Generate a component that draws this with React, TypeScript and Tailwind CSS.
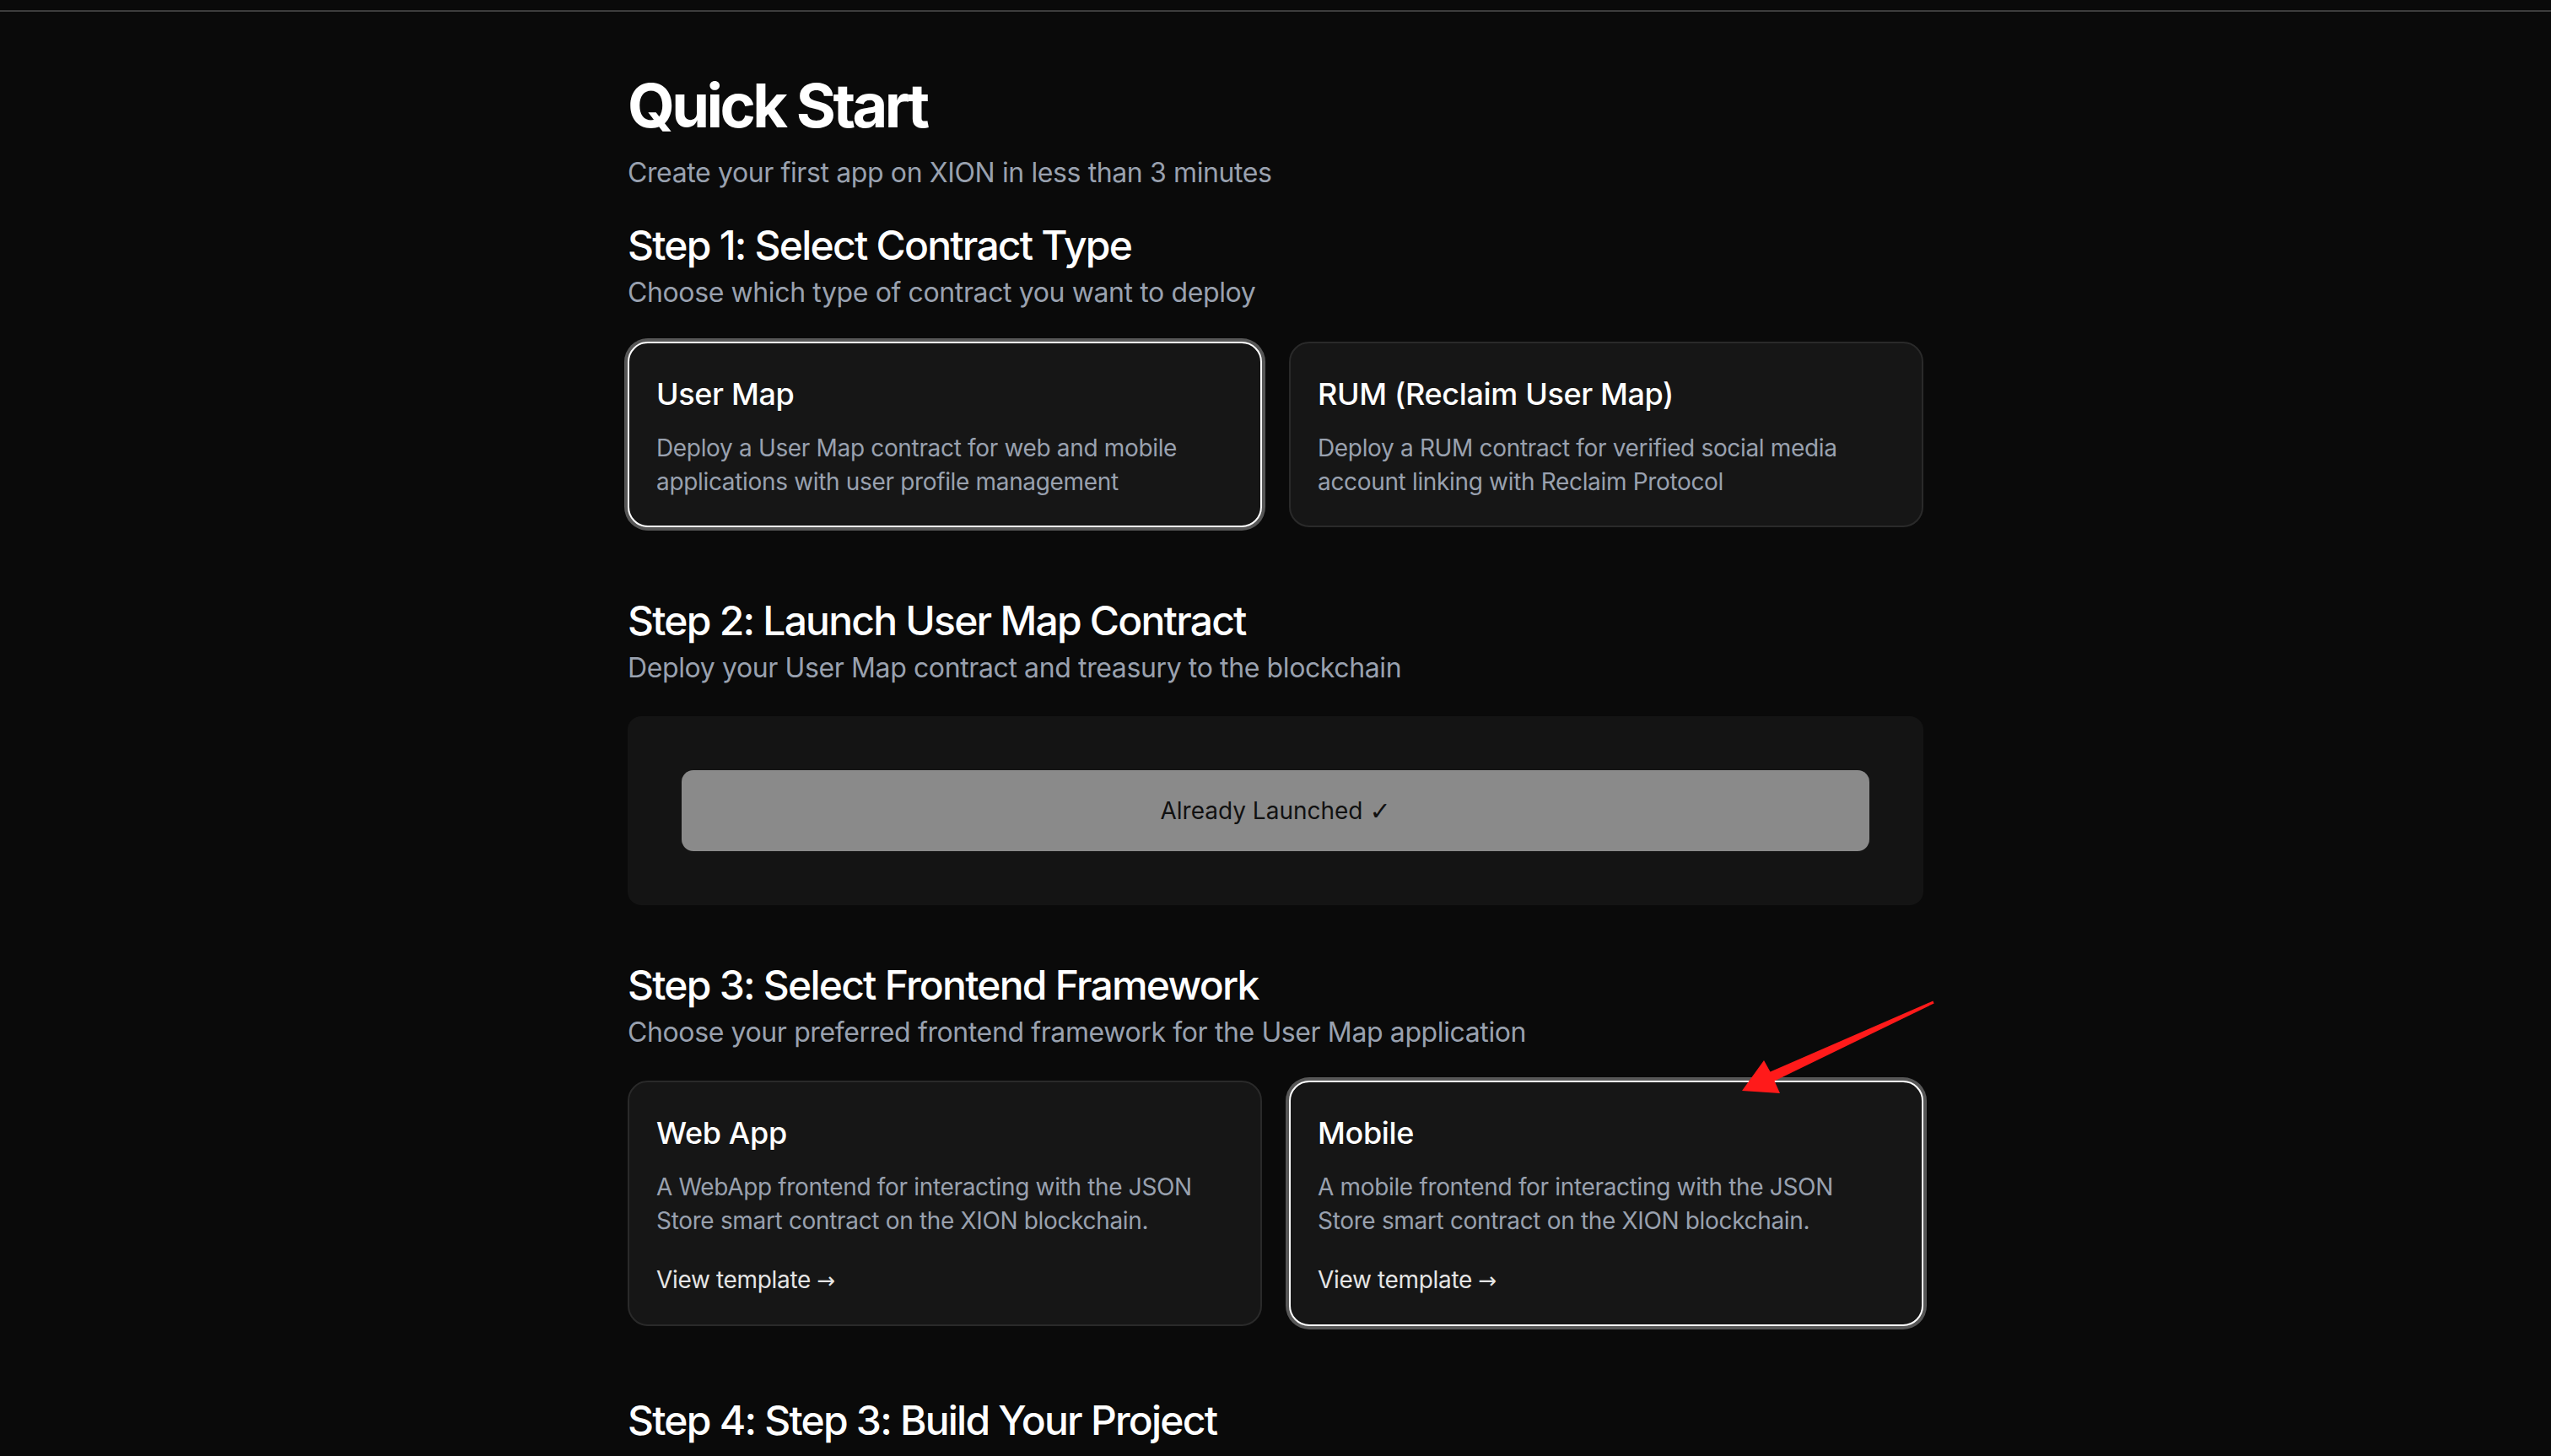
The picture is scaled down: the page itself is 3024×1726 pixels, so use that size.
import React from 'react';

interface Option {
  title: string;
  desc: string;
  link?: boolean;
  selected?: boolean;
  arrow?: boolean;
}

const contractTypes: Option[] = [
  {
    title: 'User Map',
    desc: 'Deploy a User Map contract for web and mobile applications with user profile management',
    selected: true,
  },
  {
    title: 'RUM (Reclaim User Map)',
    desc: 'Deploy a RUM contract for verified social media account linking with Reclaim Protocol',
  },
];

const frameworks: Option[] = [
  {
    title: 'Web App',
    desc: 'A WebApp frontend for interacting with the JSON Store smart contract on the XION blockchain.',
    link: true,
  },
  {
    title: 'Mobile',
    desc: 'A mobile frontend for interacting with the JSON Store smart contract on the XION blockchain.',
    link: true,
    selected: true,
    arrow: true,
  },
];

// annotation arrow drawn over the screenshot
function RedArrow() {
  return (
    <svg
      className="absolute left-[530px] top-[-100px] w-[240px] h-[120px] pointer-events-none"
      viewBox="0 0 240 120"
    >
      <polygon
        points="5,110 31,74 38.5,87.6 231.4,3.6 232.6,6.4 43.5,98.4 50,113"
        fill="#ff1a1a"
      />
    </svg>
  );
}

function OptionCard({ o }: { o: Option }) {
  return (
    <div
      className={`relative rounded-[24px] border-2 bg-[#161616] p-8 ${
        o.selected ? 'border-white shadow-[0_0_0_4px_#575757]' : 'border-[#2a2a2a]'
      }`}
    >
      <h3 className="text-[36px] leading-[56px] font-medium tracking-[-0.01em] text-white">{o.title}</h3>
      <p className="mt-4 text-[28px] leading-[40px] tracking-[-0.012em] text-gray-400">{o.desc}</p>
      {o.link && (
        <p className="mt-[30px] text-[28px] leading-[40px] tracking-[-0.012em] text-[#e5e5e5]">
          View template <span className="font-['DejaVu_Sans',sans-serif] text-[26px]">→</span>
        </p>
      )}
      {o.arrow && <RedArrow />}
    </div>
  );
}

function StepHeading({ title, sub }: { title: string; sub?: string }) {
  return (
    <div>
      <h2 className="text-[48px] leading-[64px] font-medium tracking-[-0.037em] text-white">{title}</h2>
      {sub && <p className="text-[32px] leading-[48px] tracking-[-0.012em] text-gray-400">{sub}</p>}
    </div>
  );
}

export default function App() {
  return (
    <div className="h-screen overflow-hidden bg-[#0a0a0a] text-white font-['Inter','Liberation_Sans',sans-serif]">
      <div className="h-[14px] border-b-2 border-[#3d3d3d]" />
      <main className="mx-auto w-[1536px] pt-[71px]">
        <h1 className="text-[72px] leading-[80px] font-bold tracking-[-0.05em]">Quick Start</h1>
        <p className="mt-4 text-[32px] leading-[48px] tracking-[-0.012em] text-gray-400">
          Create your first app on XION in less than 3 minutes
        </p>

        <section className="mt-[30px]">
          <StepHeading title="Step 1: Select Contract Type" sub="Choose which type of contract you want to deploy" />
          <div className="mt-[34px] grid grid-cols-2 gap-8">
            {contractTypes.map(o => <OptionCard key={o.title} o={o} />)}
          </div>
        </section>

        <section className="mt-[79px]">
          <StepHeading title="Step 2: Launch User Map Contract" sub="Deploy your User Map contract and treasury to the blockchain" />
          <div className="mt-[33px] rounded-[16px] bg-[#141414] p-16">
            <button className="flex h-24 w-full items-center justify-center rounded-[14px] bg-[#8a8a8a] text-[28px] text-[#111111]">
              Already Launched&nbsp;<span className="font-['DejaVu_Sans',sans-serif] text-[30px] font-bold">✓</span>
            </button>
          </div>
        </section>

        <section className="mt-[63px]">
          <StepHeading title="Step 3: Select Frontend Framework" sub="Choose your preferred frontend framework for the User Map application" />
          <div className="mt-[33px] grid grid-cols-2 gap-8">
            {frameworks.map(o => <OptionCard key={o.title} o={o} />)}
          </div>
        </section>

        <section className="mt-[80px]">
          <StepHeading title="Step 4: Step 3: Build Your Project" />
        </section>
      </main>
    </div>
  );
}
